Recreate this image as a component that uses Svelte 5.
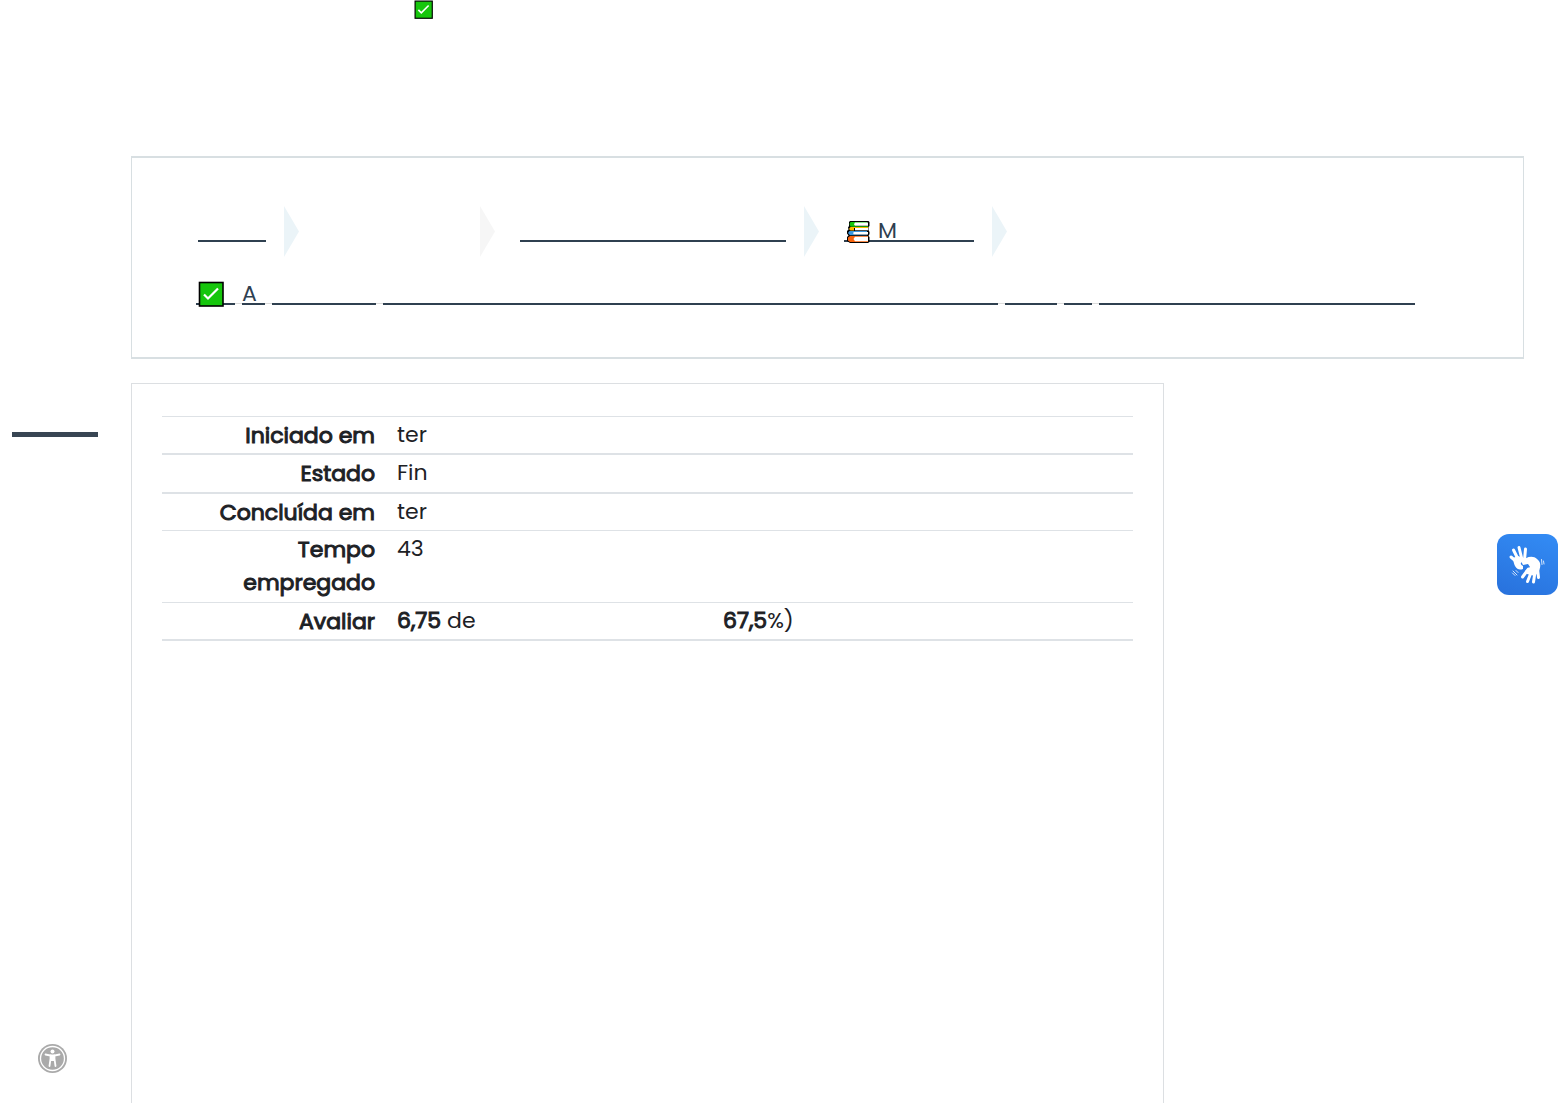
<script>
  const segments = [23, 104, 615, 52, 28, 316];
  const rows = [
    { label: 'Iniciado em', value: 'ter', thick: true },
    { label: 'Estado', value: 'Fin', thick: true, roomy: true },
    { label: 'Concluída em', value: 'ter' },
    { label: 'Tempo empregado', value: '43', tall: true }
  ];
</script>

{#snippet check()}
  <svg class="check" viewBox="0 0 26 26" aria-hidden="true">
    <rect x="1.500" y="1.500" width="23.500" height="23.500" fill="#16c60c" stroke="#000" stroke-width="1.600" />
    <path d="M6 13.500l4 4L20 7.500" fill="none" stroke="#fff" stroke-width="2.200" />
  </svg>
{/snippet}

{#snippet arrow(muted)}
  <svg class="arrow" class:muted viewBox="0 0 15 51" aria-hidden="true"><path d="M0 0L15 25.500L0 51Z" /></svg>
{/snippet}

<div class="page">
  <header>{@render check()}</header>

  <nav class="crumbs" aria-label="Trilha">
    <ol>
      <li><a class="home" href="#inicio" aria-label="Início"></a>{@render arrow(false)}</li>
      <li class="blank">{@render arrow(true)}</li>
      <li><a class="course" href="#curso" aria-label="Curso"></a>{@render arrow(false)}</li>
      <li>
        <a class="module" href="#modulo">
          <svg class="books" viewBox="0 0 24 24" aria-hidden="true">
            <path d="M4 1H22.500L23.500 2V6L22.500 7V10L23.500 12V14L22.500 16L23.500 17V22L22 23H4L1 21V17L2.500 15.500L1 13.500V11L2.500 9.500L2 7.500L3 6V2Z" fill="#000" />
            <path d="M4.500 2H21V3H9V6H22V6.800H4.500L3.500 4Z" fill="#16c60c" />
            <path d="M9 2.600H22V5.800H9L8 4.300Z" fill="#fff" />
            <path d="M4.500 7H22V8H8V10.500H4.500L3 9Z" fill="#ffb900" />
            <path d="M9 8H22V10.300H9Z" fill="#fff" />
            <path d="M3.500 11H21V12H8V14.500H21V15.300H4L2 13Z" fill="#3a96dd" />
            <path d="M8 12H22V14.500H8L7 13Z" fill="#fff" />
            <path d="M4 16H22V17H9V21H22V22H4L2 20.500V17.500Z" fill="#f7630c" />
            <path d="M9 16.800H22V21.200H9L7.500 19Z" fill="#fff" />
          </svg>
          <span>M</span>
        </a>{@render arrow(false)}
      </li>
    </ol>
    <a class="activity" href="#atividade">
      <span class="segment mark">{@render check()}</span>
      {#each segments as width, i}
        <span class="segment" style:width="{width}px">{i === 0 ? 'A' : ''}</span>
      {/each}
    </a>
  </nav>

  <div class="columns">
    <aside><hr /></aside>
    <main>
      <table>
        <tbody>
          {#each rows as row}
            <tr class:thick={row.thick} class:roomy={row.roomy} class:tall={row.tall}>
              <th scope="row">{row.label}</th>
              <td>{row.value}</td>
            </tr>
          {/each}
          <tr class="thick">
            <th scope="row">Avaliar</th>
            <td><div class="grade"><span class="score"><b>6,75</b> de</span><span><b>67,5</b>%)</span></div></td>
          </tr>
        </tbody>
      </table>
    </main>
  </div>
</div>

<button class="signs" aria-label="Libras">
  <svg viewBox="0 0 61 61" aria-hidden="true">
    <g fill="none" stroke="#fff" stroke-linecap="round">
      <path d="M14 23l7 6M16.500 16l5.500 11M22 13.500l3 12M28.500 15l-1 11" stroke-width="3" />
      <path d="M25.500 43l6-8M30.500 47.500l4-10M36.500 48l1.500-10M41.500 43.500l-1-9" stroke-width="3" />
      <path d="M44.500 25.500l.5 5M46.500 27l.5 3M16 37l4 4M15.500 39l2.500 2.500M19 36.500l2 2" stroke-width="0.800" />
    </g>
    <path d="M16 24L21 22L29 25L28 27.500C24 27 22 30 26 32L26 35C20 37 17 33 16 24Z" fill="#fff" />
    <path d="M24.500 28C28 23 36 21 40 25C44 28 44 32 42 37L38 42L30 40L28 37L33 33L31 30L26 31Z" fill="#fff" />
  </svg>
</button>

<button class="access" aria-label="Acessibilidade">
  <svg viewBox="0 0 29 29" aria-hidden="true">
    <circle cx="14.500" cy="14.500" r="14.500" fill="#aaa" />
    <circle cx="14.500" cy="14.500" r="12" fill="none" stroke="#fff" stroke-width="1.300" />
    <circle cx="14.500" cy="7.500" r="2" fill="#fff" />
    <path d="M7.500 10.500L12.500 11.500V15L11.500 22M21.500 10.500L16.500 11.500V15L17.500 22" fill="none" stroke="#fff" stroke-width="1.800" stroke-linecap="round" />
    <path d="M12 10.500H17V17H12Z" fill="#fff" />
  </svg>
</button>

<style>
  :global(body) { margin: 0; background: #fff; }
  :global(#app) { font-family: Poppins, Inter, "Open Sans", sans-serif; color: #1d2125; }
  .page { display: flex; flex-direction: column; min-height: 100vh; font-size: 22px; line-height: 33px; }
  svg { display: block; flex: none; }
  header { display: flex; box-sizing: border-box; height: 156px; padding: 0 0 0 414px; }
  .check { width: 26px; height: 26px; }
  header .check { width: 19px; height: 19px; }
  .crumbs { margin: 0 34px 0 131px; padding: 48px 64px 52px; border: solid #d8dfe2; border-width: 2px 1px; }
  ol { display: flex; flex-wrap: wrap; margin: 0 0 22px; padding: 0 0 0 2px; list-style: none; }
  li { display: flex; align-items: center; gap: 18px; margin-right: 25px; }
  .blank { width: 171px; justify-content: flex-end; }
  a { color: #2f4050; text-decoration: none; }
  li a { display: flex; align-items: center; gap: 8px; box-sizing: border-box; height: 28px; border-bottom: 2px solid #2f4050; margin-top: -8px; }
  .home { width: 68px; }
  .course { width: 266px; }
  .module { width: 130px; padding-left: 2px; }
  .books { width: 24px; height: 24px; margin-top: 10px; }
  .module span { margin-top: 8px; }
  .arrow { width: 15px; height: 51px; fill: #ebf4f8; }
  .arrow.muted { fill: #f6f6f6; }
  .activity { display: flex; flex-wrap: wrap; gap: 7px; width: fit-content; background: linear-gradient(#ddd, #ddd) 0 24px / 100% 1px no-repeat; }
  .segment { box-sizing: border-box; height: 26px; line-height: 29px; border-bottom: 2px solid #2f4050; }
  .mark { width: 39px; padding: 2px 0 0 2px; }
  .columns { display: grid; grid-template-columns: 131px minmax(0, 1fr) 360px; flex: 1; margin-top: 24px; padding-right: 34px; }
  aside { padding: 49px 33px 0 12px; }
  hr { height: 5px; margin: 0; border: 0; background: #384553; }
  main { padding: 32px 30px 0; border: 1px solid #dcdfe2; border-bottom: 0; }
  table { width: 100%; table-layout: fixed; border-spacing: 0; border-top: 1px solid #dee2e6; }
  th, td { padding: 1px 11px 2px; border-bottom: 1px solid #dee2e6; vertical-align: top; }
  .thick th, .thick td { border-bottom-width: 2px; }
  th { box-sizing: border-box; width: 224px; padding-top: 2px; padding-bottom: 1px; padding-left: 50px; text-align: right; }
  .roomy th { padding-bottom: 2px; }
  .tall th { padding-bottom: 3px; }
  th, b { font-weight: 400; -webkit-text-stroke: 1px currentColor; }
  .grade { display: flex; }
  .score { width: 326px; }
  button { position: fixed; padding: 0; border: 0; background: none; cursor: pointer; }
  .signs { right: 0; top: 534px; width: 61px; height: 61px; border-radius: 12px; background: linear-gradient(20deg, #2871dc, #338cf5); }
  .access { left: 38px; bottom: 30px; width: 29px; height: 29px; }
</style>
